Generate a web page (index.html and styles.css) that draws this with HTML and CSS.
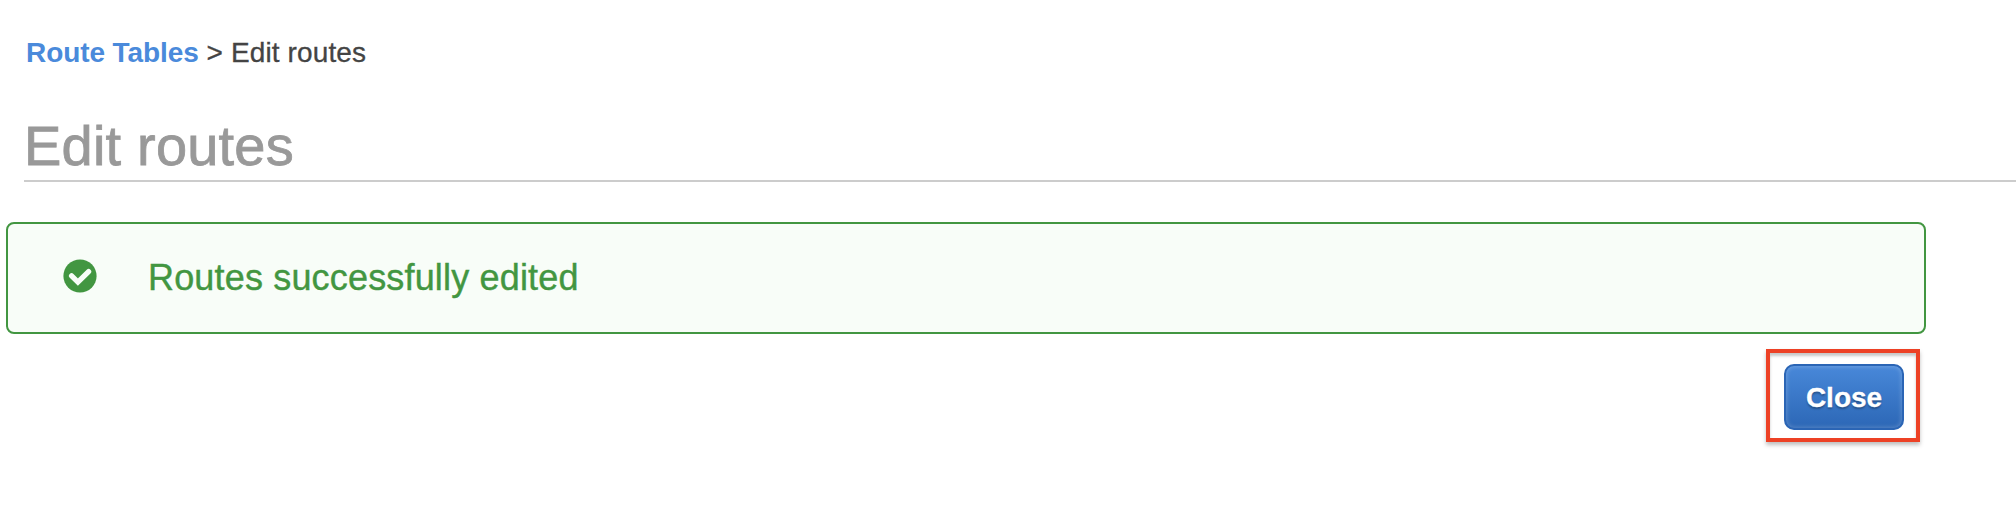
FILE: index.html
```html
<!DOCTYPE html>
<html lang="en">
<head>
<meta charset="utf-8">
<title>Edit routes</title>
<link rel="stylesheet" href="styles.css">
</head>
<body>
<header class="page-header">
  <nav class="breadcrumb"><a class="breadcrumb-link" href="#">Route Tables</a> <span class="breadcrumb-current">&gt; Edit routes</span></nav>
  <h1 class="page-title"><span class="title-text">Edit routes</span></h1>
</header>
<main class="content">
  <div class="alert">
    <svg class="alert-icon" viewBox="0 0 34 34" aria-hidden="true">
      <circle cx="17" cy="17" r="16.6" fill="#429641"/>
      <path d="M8.6 16.9 14.9 23.1 25.6 12.6" fill="none" stroke="#f8fdf8" stroke-width="5.3" stroke-linejoin="miter" stroke-linecap="round"/>
    </svg>
    <span class="alert-text">Routes successfully edited</span>
  </div>
  <div class="actions">
    <div class="highlight">
      <button class="close-button" type="button"><span class="close-label">Close</span></button>
    </div>
  </div>
</main>
</body>
</html>
```
FILE: styles.css
```css
* {
  box-sizing: border-box;
}

body {
  margin: 0;
  height: 516px;
  overflow: hidden;
  background: #fff;
  font-family: "Liberation Sans", Arial, sans-serif;
}

.page-header {
  padding: 37px 0 0 24px;
}

.breadcrumb {
  padding-left: 2px;
  font-size: 28px;
  line-height: 32px;
  color: #444;
}

.breadcrumb-link {
  font-weight: bold;
  letter-spacing: -0.08px;
  color: #4a8adb;
  text-decoration: none;
}

.breadcrumb-current {
  letter-spacing: 0.12px;
  -webkit-text-stroke: 0.3px currentColor;
}

.page-title {
  margin: 45px 0 0;
  height: 68px;
  border-bottom: 2px solid #ccc;
  font-size: 56px;
  font-weight: normal;
  letter-spacing: 0.2px;
  line-height: 64px;
  color: #999;
  -webkit-text-stroke: 0.8px currentColor;
}

.content {
  width: 1926px;
  padding: 40px 0 0 6px;
}

.alert {
  display: flex;
  align-items: center;
  height: 112px;
  padding-left: 55px;
  border: 2px solid #429641;
  border-radius: 8px;
  background: #f8fdf8;
  color: #429641;
}

.alert-icon {
  width: 34px;
  height: 34px;
  margin: 0 51px 4px 0;
}

.alert-text {
  font-size: 36px;
  letter-spacing: 0.17px;
  line-height: 42px;
  -webkit-text-stroke: 0.4px currentColor;
}

.actions {
  display: flex;
  justify-content: flex-end;
  padding: 15px 6px 0 0;
}

.highlight {
  width: 154px;
  height: 93px;
  padding: 11px 0 0 14px;
  border: 4px solid #ed4125;
  box-shadow: 0 3px 4px rgba(0, 0, 0, 0.25), inset 0 3px 3px rgba(0, 0, 0, 0.22);
}

.close-button {
  display: flex;
  align-items: center;
  justify-content: center;
  width: 120px;
  height: 66px;
  padding: 2px 0 0;
  border: 2px solid #2b65b5;
  border-radius: 10px;
  background: linear-gradient(#4888d9, #2c67b6);
  box-shadow: inset 0 0 4px 1px rgba(255, 255, 255, 0.2);
  color: #fff;
  font: bold 28px/32px "Liberation Sans", Arial, sans-serif;
  text-shadow: 0 2px 2px rgba(0, 0, 0, 0.3);
}

.close-label {
  -webkit-text-stroke: 0.3px currentColor;
}
```
